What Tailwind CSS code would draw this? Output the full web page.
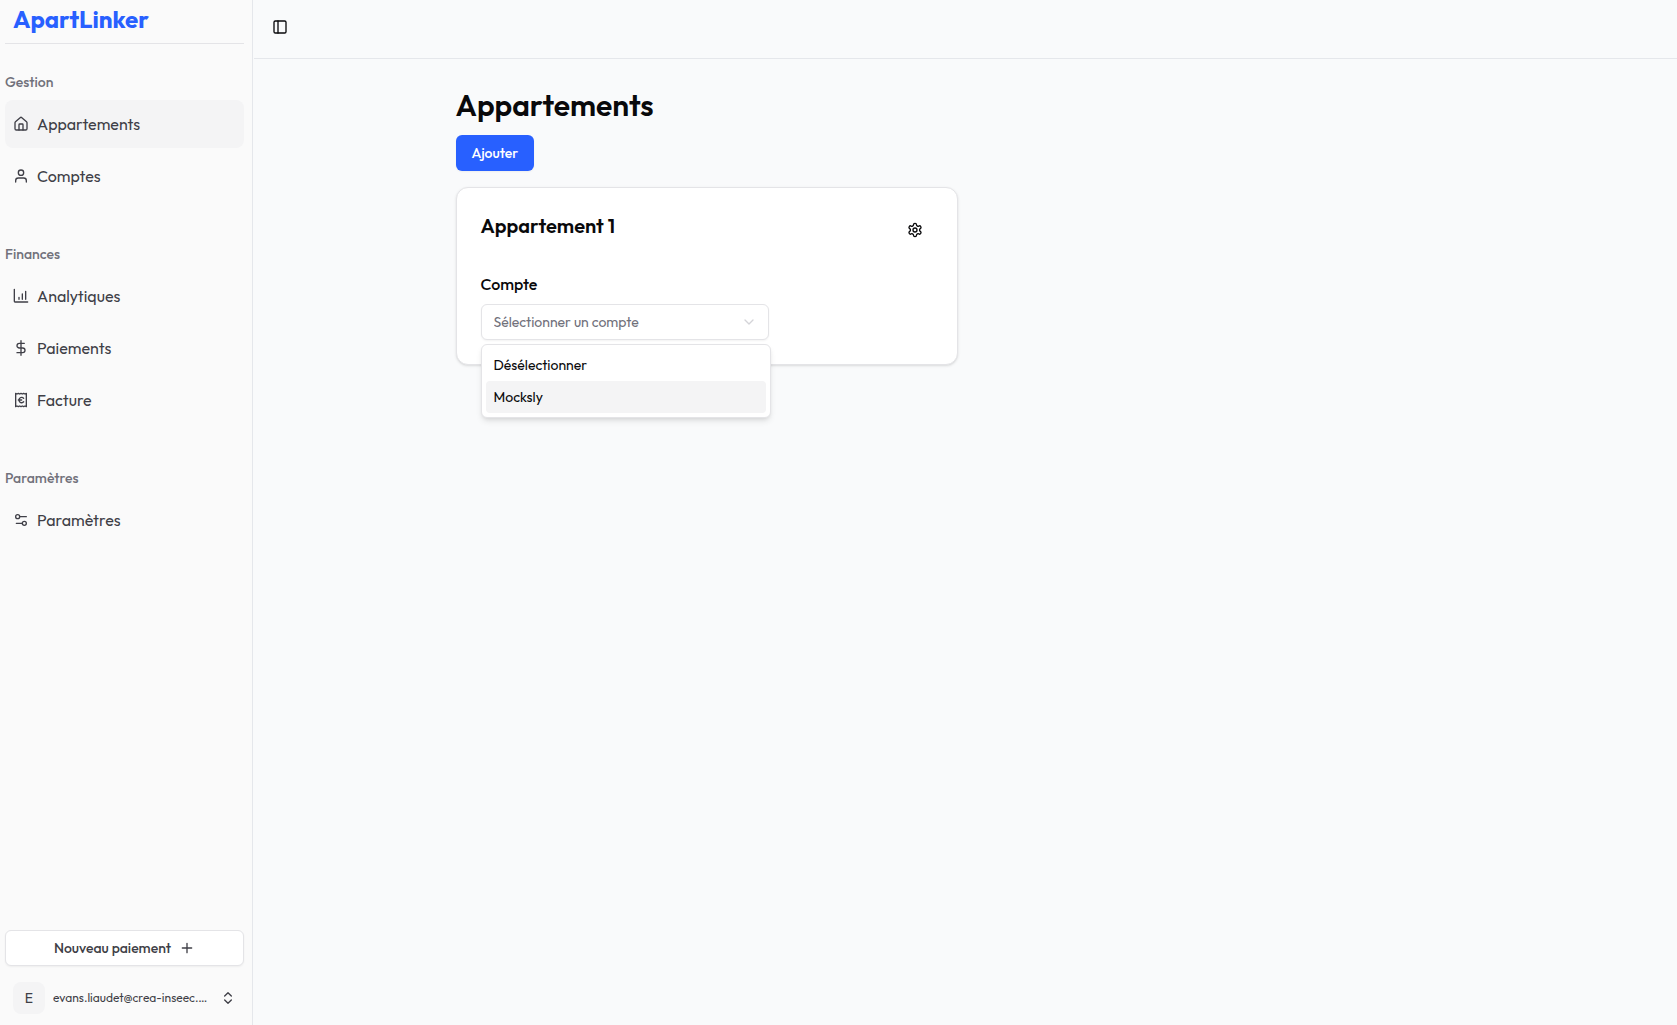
<!DOCTYPE html>
<html lang="fr">
<head>
<meta charset="utf-8">
<meta name="viewport" content="width=device-width, initial-scale=1">
<title>ApartLinker – Appartements</title>
<script src="https://cdn.jsdelivr.net/npm/@tailwindcss/browser@4"></script>
</head>
<body class="flex min-h-screen bg-[#f9fafb] font-[Outfit,Lato,sans-serif] text-zinc-950">
<svg class="hidden" aria-hidden="true">
  <defs>
    <symbol id="house" viewBox="0 0 24 24"><path d="M15 21v-8a1 1 0 0 0-1-1h-4a1 1 0 0 0-1 1v8"/><path d="M3 10a2 2 0 0 1 .709-1.528l7-5.999a2 2 0 0 1 2.582 0l7 5.999A2 2 0 0 1 21 10v9a2 2 0 0 1-2 2H5a2 2 0 0 1-2-2z"/></symbol>
    <symbol id="user" viewBox="0 0 24 24"><circle cx="12" cy="7" r="4"/><path d="M20 21v-2a4 4 0 0 0-4-4H8a4 4 0 0 0-4 4v2"/></symbol>
    <symbol id="chart" viewBox="0 0 24 24"><path d="M2 2v18a1 1 0 0 0 1 1h19M9 17v-3M14 17V9M19 17V5"/></symbol>
    <symbol id="dollar" viewBox="0 0 24 24"><path d="M12 1v22M17 5H9.500a3.500 3.500 0 0 0 0 7h5a3.500 3.500 0 0 1 0 7H6"/></symbol>
    <symbol id="receipt" viewBox="0 0 24 24"><path d="M4 2v20l2-1 2 1 2-1 2 1 2-1 2 1 2-1 2 1V2l-2 1-2-1-2 1-2-1-2 1-2-1-2 1Z"/><path d="M8 12h5M16 9.500a4 4 0 1 0 0 5.200"/></symbol>
    <symbol id="sliders" viewBox="0 0 24 24"><path d="M20 7h-9M14 17H5"/><circle cx="17" cy="17" r="3"/><circle cx="7" cy="7" r="3"/></symbol>
    <symbol id="gear" viewBox="0 0 24 24"><path d="M12.220 2h-.44a2 2 0 0 0-2 2v.18a2 2 0 0 1-1 1.730l-.43.25a2 2 0 0 1-2 0l-.15-.08a2 2 0 0 0-2.730.73l-.22.38a2 2 0 0 0 .73 2.730l.15.1a2 2 0 0 1 1 1.720v.51a2 2 0 0 1-1 1.740l-.15.09a2 2 0 0 0-.73 2.730l.22.38a2 2 0 0 0 2.730.73l.15-.08a2 2 0 0 1 2 0l.43.25a2 2 0 0 1 1 1.730V20a2 2 0 0 0 2 2h.44a2 2 0 0 0 2-2v-.18a2 2 0 0 1 1-1.730l.43-.25a2 2 0 0 1 2 0l.15.08a2 2 0 0 0 2.730-.73l.22-.39a2 2 0 0 0-.73-2.730l-.15-.08a2 2 0 0 1-1-1.740v-.5a2 2 0 0 1 1-1.740l.15-.09a2 2 0 0 0 .73-2.730l-.22-.38a2 2 0 0 0-2.730-.73l-.15.08a2 2 0 0 1-2 0l-.43-.25a2 2 0 0 1-1-1.730V4a2 2 0 0 0-2-2z"/><circle cx="12" cy="12" r="3"/></symbol>
    <symbol id="panel" viewBox="0 0 24 24"><rect x="3" y="3" width="18" height="18" rx="2"/><path d="M9 3v18"/></symbol>
  </defs>
</svg>

<aside class="sticky top-0 flex h-screen w-[253px] shrink-0 flex-col border-r border-gray-200 bg-[#fafafa] pl-[5px] pr-2 text-zinc-700">
  <div class="flex h-11 items-start border-b border-zinc-200 pl-2">
    <a href="#" class="text-2xl leading-[38px] font-bold text-[#2860ff]">ApartLinker</a>
  </div>
  <nav class="flex flex-col gap-9 pt-5" aria-label="Navigation principale">
    <section>
      <h2 class="flex h-9 items-center text-sm font-medium text-zinc-500">Gestion</h2>
      <ul class="flex flex-col gap-1">
        <li><a href="#" aria-current="page" class="flex h-12 items-center gap-2 rounded-lg bg-zinc-100 px-2 text-base"><svg class="size-4 fill-none stroke-current stroke-2 [stroke-linecap:round] [stroke-linejoin:round]"><use href="#house"/></svg>Appartements</a></li>
        <li><a href="#" class="flex h-12 items-center gap-2 rounded-lg px-2 text-base"><svg class="size-4 fill-none stroke-current stroke-2 [stroke-linecap:round] [stroke-linejoin:round]"><use href="#user"/></svg>Comptes</a></li>
      </ul>
    </section>
    <section>
      <h2 class="flex h-9 items-center text-sm font-medium text-zinc-500">Finances</h2>
      <ul class="flex flex-col gap-1">
        <li><a href="#" class="flex h-12 items-center gap-2 rounded-lg px-2 text-base"><svg class="size-4 fill-none stroke-current stroke-2 [stroke-linecap:round] [stroke-linejoin:round]"><use href="#chart"/></svg>Analytiques</a></li>
        <li><a href="#" class="flex h-12 items-center gap-2 rounded-lg px-2 text-base"><svg class="size-4 fill-none stroke-current stroke-2 [stroke-linecap:round] [stroke-linejoin:round]"><use href="#dollar"/></svg>Paiements</a></li>
        <li><a href="#" class="flex h-12 items-center gap-2 rounded-lg px-2 text-base"><svg class="size-4 fill-none stroke-current stroke-2 [stroke-linecap:round] [stroke-linejoin:round]"><use href="#receipt"/></svg>Facture</a></li>
      </ul>
    </section>
    <section>
      <h2 class="flex h-9 items-center text-sm font-medium text-zinc-500">Paramètres</h2>
      <ul class="flex flex-col gap-1">
        <li><a href="#" class="flex h-12 items-center gap-2 rounded-lg px-2 text-base"><svg class="size-4 fill-none stroke-current stroke-2 [stroke-linecap:round] [stroke-linejoin:round]"><use href="#sliders"/></svg>Paramètres</a></li>
      </ul>
    </section>
  </nav>
  <div class="mt-auto flex flex-col gap-2 pb-[3px]">
    <button type="button" class="flex h-9 items-center justify-center gap-2 rounded-md border border-zinc-200 bg-white text-sm font-medium shadow-xs">Nouveau paiement
      <svg class="size-4 fill-none stroke-current stroke-2 [stroke-linecap:round]" viewBox="0 0 24 24"><path d="M5 12h14M12 5v14"/></svg>
    </button>
    <button type="button" class="flex h-12 items-center gap-2 p-2 text-left">
      <span class="flex size-8 shrink-0 items-center justify-center rounded-lg bg-zinc-100 text-sm">E</span>
      <span class="w-[156px] truncate text-xs">evans.liaudet@crea-inseec.com</span>
      <svg class="ml-auto size-4 fill-none stroke-current stroke-2 [stroke-linecap:round] [stroke-linejoin:round]" viewBox="0 0 24 24"><path d="m7 15 5 5 5-5M7 9l5-5 5 5"/></svg>
    </button>
  </div>
</aside>

<div class="ml-px min-w-0 flex-1">
  <header class="flex h-[59px] items-center border-b border-gray-200 px-3 pb-1">
    <button type="button" aria-label="Afficher ou masquer le menu" class="flex size-7 items-center justify-center"><svg class="size-4 fill-none stroke-current stroke-2 [stroke-linecap:round] [stroke-linejoin:round]"><use href="#panel"/></svg></button>
  </header>
  <main class="mx-auto max-w-[1020px] pt-7">
    <h1 class="text-3xl font-semibold">Appartements</h1>
    <button type="button" class="mt-3 h-9 rounded-md bg-[#2860ff] px-4 text-sm font-medium text-white shadow-xs">Ajouter</button>
    <div class="mt-4 grid grid-cols-2 gap-4">
      <article class="rounded-xl border border-zinc-200 bg-white px-6 pt-6 pb-6 shadow-sm">
        <div class="flex items-start justify-between">
          <h2 class="text-xl font-semibold">Appartement 1</h2>
          <button type="button" aria-label="Réglages" class="flex size-9 items-center justify-center"><svg class="size-4 fill-none stroke-current stroke-2 [stroke-linecap:round] [stroke-linejoin:round]"><use href="#gear"/></svg></button>
        </div>
        <label for="compte" class="mt-6 block font-medium">Compte</label>
        <div class="relative mt-2 w-72">
          <select id="compte" class="h-9 w-full appearance-none rounded-md border border-zinc-200 bg-white px-3 text-sm text-zinc-500 shadow-xs">
            <option>Sélectionner un compte</option>
          </select>
          <svg class="pointer-events-none absolute top-[10px] right-3 size-4 fill-none stroke-zinc-300 stroke-2 [stroke-linecap:round] [stroke-linejoin:round]" viewBox="0 0 24 24"><path d="m6 9 6 6 6-6"/></svg>
          <ul role="listbox" aria-label="Compte" class="absolute top-10 left-0 w-[290px] rounded-md border border-zinc-200 bg-white p-1 text-sm shadow-md">
            <li role="option" aria-selected="false" class="flex h-8 items-center rounded-sm px-2">Désélectionner</li>
            <li role="option" aria-selected="true" class="flex h-8 items-center rounded-sm bg-zinc-100 px-2">Mocksly</li>
          </ul>
        </div>
      </article>
    </div>
  </main>
</div>
</body>
</html>
